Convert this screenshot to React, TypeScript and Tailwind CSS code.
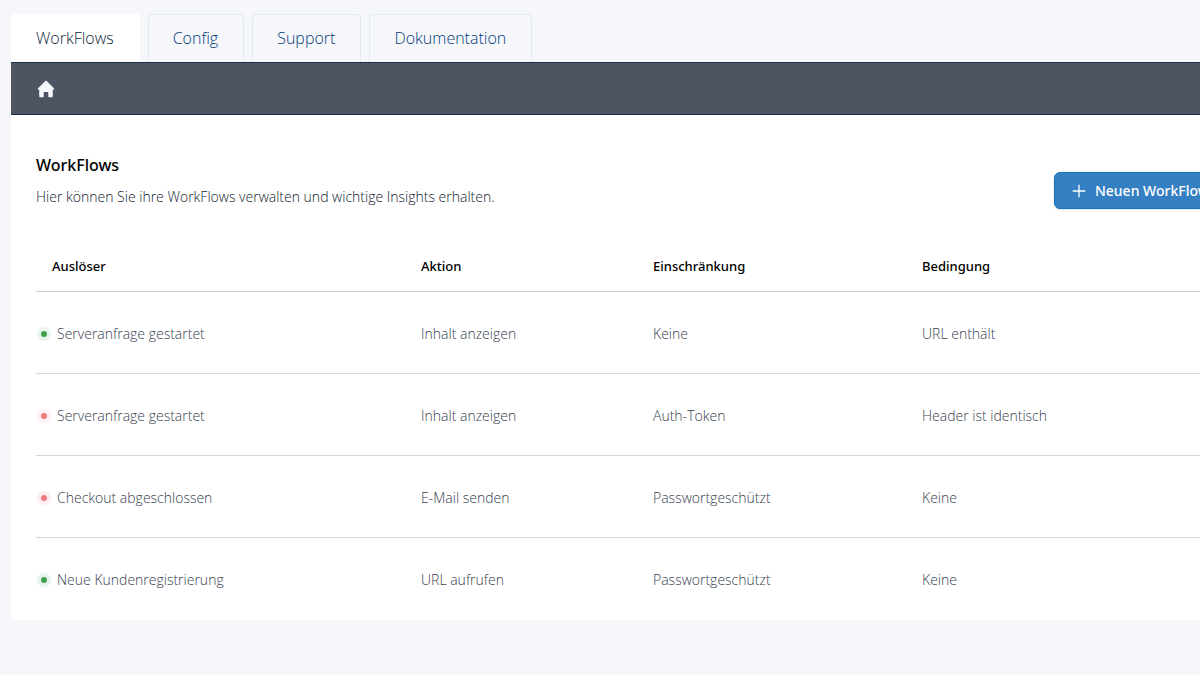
import { useState } from "react";
import { clsx } from "clsx";

interface Workflow {
  trigger: string;
  action: string;
  restriction: string;
  condition: string;
  active: boolean;
}

const tabs = ["WorkFlows", "Config", "Support", "Dokumentation"];

const workflows: Workflow[] = [
  { trigger: "Serveranfrage gestartet", action: "Inhalt anzeigen", restriction: "Keine", condition: "URL enthält", active: true },
  { trigger: "Serveranfrage gestartet", action: "Inhalt anzeigen", restriction: "Auth-Token", condition: "Header ist identisch", active: false },
  { trigger: "Checkout abgeschlossen", action: "E-Mail senden", restriction: "Passwortgeschützt", condition: "Keine", active: false },
  { trigger: "Neue Kundenregistrierung", action: "URL aufrufen", restriction: "Passwortgeschützt", condition: "Keine", active: true },
];

function HomeIcon() {
  return (
    <svg viewBox="0 0 18 18" className="h-[18px] w-[18px]" fill="currentColor" aria-hidden="true">
      <path d="M8.3.9a1 1 0 0 1 1.4 0l7.2 7.3c.6.6.2 1.5-.6 1.5h-.5v6.2c0 .8-.6 1.3-1.3 1.3h-2.2c-.6 0-1-.4-1-1v-3.6c0-.4-.3-.7-.7-.7H7.4c-.4 0-.7.3-.7.7v3.6c0 .6-.4 1-1 1H3.5c-.7 0-1.3-.5-1.3-1.3V9.7h-.5c-.8 0-1.2-.9-.6-1.5z" />
    </svg>
  );
}

function StatusDot({ active }: { active: boolean }) {
  return (
    <span
      role="img"
      aria-label={active ? "Aktiv" : "Inaktiv"}
      className={clsx(
        "flex h-3.5 w-3.5 shrink-0 items-center justify-center rounded-full",
        active ? "bg-[#e9f4ec]" : "bg-[#fdeff1]"
      )}
    >
      <span className={clsx("h-1.5 w-1.5 rounded-full", active ? "bg-[#3fa04c]" : "bg-[#ee7983]")} />
    </span>
  );
}

export default function App() {
  const [activeTab, setActiveTab] = useState("WorkFlows");

  return (
    <div className="min-h-screen overflow-x-hidden bg-[#f5f7fb] pl-[11px] pt-3.5 font-['Open_Sans',sans-serif]">
      {/* Tabs */}
      <div className="flex gap-2" role="tablist">
        {tabs.map((tab) => (
          <button
            key={tab}
            type="button"
            role="tab"
            aria-selected={tab === activeTab}
            onClick={() => setActiveTab(tab)}
            className={clsx(
              "h-12 rounded-t border border-b-0 pr-[25px] pb-px pl-6 text-base font-light",
              tab === activeTab
                ? "border-white bg-white text-[#10273c]"
                : "border-[#e5e9f1] text-[#023a78]"
            )}
          >
            {tab}
          </button>
        ))}
      </div>

      <main className="min-w-[1240px] bg-white pb-px">
        <nav className="flex h-[53px] items-center border-y border-[#1b3049] bg-[#4e5562] px-[26px]">
          <a href="#" aria-label="Startseite" className="text-[#f5f7fb]">
            <HomeIcon />
          </a>
        </nav>

        <div className="px-[25px] pt-[37px]">
          <header className="flex items-center justify-between">
            <div>
              <h1 className="font-['Noto_Sans',sans-serif] text-base leading-6 font-medium text-black">WorkFlows</h1>
              <p className="mt-2 text-sm leading-6 font-light text-[#0f1b30]">
                Hier können Sie ihre WorkFlows verwalten und wichtige Insights erhalten.
              </p>
            </div>
            <button
              type="button"
              className="mt-5 flex h-[37px] items-center gap-2 rounded-md border border-[#1474bd] bg-[#3580c3] px-4 pt-px font-['Noto_Sans',sans-serif] text-sm font-medium text-white shadow-sm"
            >
              <svg viewBox="0 0 16 16" className="h-4 w-4" fill="none" stroke="currentColor" strokeWidth="1.3" aria-hidden="true">
                <path d="M8 1.7v12.6M1.7 8h12.6" />
              </svg>
              Neuen WorkFlow
            </button>
          </header>

          <table className="mt-[34px] w-full table-fixed text-left text-sm">
            <thead>
              <tr className="h-12 border-b border-[#c9cbcd] font-['Noto_Sans',sans-serif] text-[13px] text-black">
                <th className="w-[369px] px-4 font-medium">Auslöser</th>
                <th className="w-[232px] px-4 font-medium">Aktion</th>
                <th className="w-[269px] px-4 font-medium">Einschränkung</th>
                <th className="px-4 font-medium">Bedingung</th>
              </tr>
            </thead>
            <tbody className="divide-y divide-[#d5d7db] font-light text-[#364150]">
              {workflows.map((workflow, index) => (
                <tr key={index} className="h-[82px]">
                  <td className="pt-1">
                    <div className="flex items-center gap-1.5 pl-px">
                      <StatusDot active={workflow.active} />
                      {workflow.trigger}
                    </div>
                  </td>
                  <td className="px-4 pt-1">{workflow.action}</td>
                  <td className="px-4 pt-1">{workflow.restriction}</td>
                  <td className="px-4 pt-1">{workflow.condition}</td>
                </tr>
              ))}
            </tbody>
          </table>
        </div>
      </main>
    </div>
  );
}
